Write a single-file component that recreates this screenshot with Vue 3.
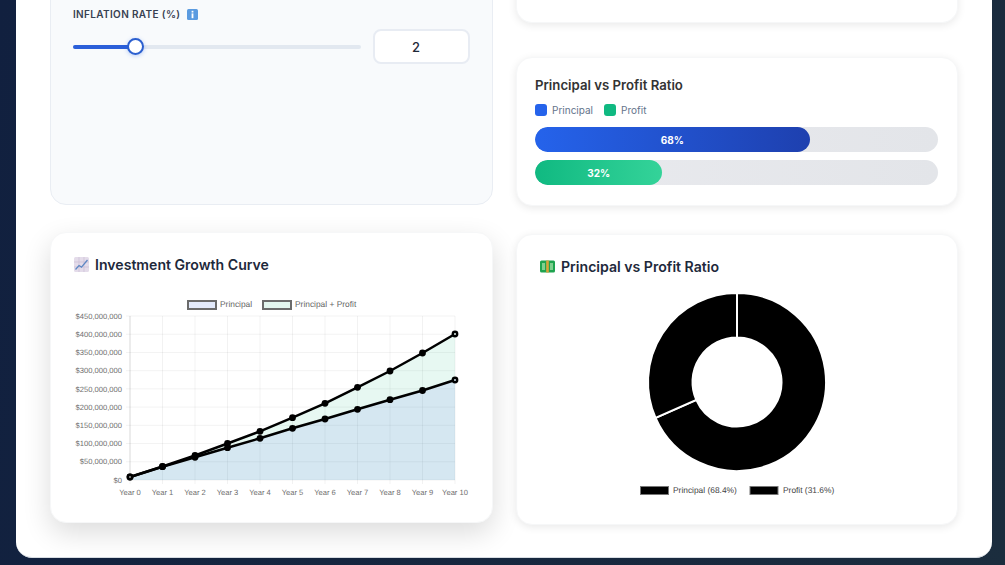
<script setup>
import { computed } from 'vue'

// y positions of the chart read off in page pixels
const plot = { left: 130, right: 455, top: 316, bottom: 480 }
const years = [0, 1, 2, 3, 4, 5, 6, 7, 8, 9, 10]
const principalY = [477, 466.7, 457.3, 447.7, 438.3, 428.3, 419, 409.3, 399.7, 390.5, 380]
const totalY = [477, 466.5, 455.5, 443.5, 431.3, 417.7, 403.3, 387.3, 371, 353, 334]
const yTicks = ['$450,000,000', '$400,000,000', '$350,000,000', '$300,000,000', '$250,000,000',
  '$200,000,000', '$150,000,000', '$100,000,000', '$50,000,000', '$0']

const stepX = (plot.right - plot.left) / 10
const stepY = (plot.bottom - plot.top) / 9

const xAt = (i) => plot.left + stepX * i
const yAt = (i) => plot.top + stepY * i

function linePoints(values) {
  return values.map((y, i) => `${xAt(i)},${y}`).join(' ')
}

const principalLine = computed(() => linePoints(principalY))
const totalLine = computed(() => linePoints(totalY))
const principalArea = computed(() => `${plot.left},${plot.bottom} ${principalLine.value} ${plot.right},${plot.bottom}`)
const totalArea = computed(() => `${totalLine.value} ${[...principalY].reverse().map((y, i) => `${xAt(10 - i)},${y}`).join(' ')}`)

// donut
const donut = { cx: 737, cy: 382, outer: 89, inner: 44.5 }

function arcPath(fromDeg, toDeg) {
  const rad = (d) => (d * Math.PI) / 180
  const pt = (r, d) => `${donut.cx + r * Math.sin(rad(d))} ${donut.cy - r * Math.cos(rad(d))}`
  const large = toDeg - fromDeg > 180 ? 1 : 0
  return `M${pt(donut.outer, fromDeg)} A${donut.outer} ${donut.outer} 0 ${large} 1 ${pt(donut.outer, toDeg)} `
    + `L${pt(donut.inner, toDeg)} A${donut.inner} ${donut.inner} 0 ${large} 0 ${pt(donut.inner, fromDeg)} Z`
}

const slices = [arcPath(0, 246.24), arcPath(246.24, 360)]
</script>

<template>
  <div class="page">
    <main class="panel">
      <section class="grid">
        <div class="card card--inputs">
          <div class="field-label">
            <span>INFLATION RATE (%)</span>
            <svg class="info-icon" width="11" height="11" viewBox="0 0 11 11">
              <rect width="11" height="11" rx="1.5" fill="#5b9be0" />
              <rect x="4.6" y="1.8" width="1.8" height="1.7" fill="#fff" />
              <rect x="4.6" y="4.4" width="1.8" height="4.8" fill="#fff" />
            </svg>
          </div>
          <div class="slider-row">
            <div class="slider">
              <div class="slider__fill"></div>
              <div class="slider__thumb"></div>
            </div>
            <input class="slider-input" type="text" value="2" readonly />
          </div>
        </div>

        <div class="side">
          <div class="card card--stub"></div>
          <div class="card card--ratio">
            <h3 class="ratio-title">Principal vs Profit Ratio</h3>
            <div class="ratio-legend">
              <span class="swatch swatch--blue"></span><span class="ratio-legend__text">Principal</span>
              <span class="swatch swatch--green"></span><span class="ratio-legend__text">Profit</span>
            </div>
            <div class="bar"><div class="bar__fill bar__fill--blue">68%</div></div>
            <div class="bar"><div class="bar__fill bar__fill--green">32%</div></div>
          </div>
        </div>

        <div class="card card--chart card--lifted">
          <h3 class="chart-title">
            <svg class="title-icon" width="15" height="15" viewBox="0 0 15 15">
              <rect width="15" height="15" rx="1.5" fill="#e4dcea" />
              <path d="M0 5h15M0 10h15M5 0v15M10 0v15" stroke="#cbbfd6" stroke-width="0.7" />
              <path d="M1.5 12.5 5 8.5l2.5 1.6L13.5 3" fill="none" stroke="#5f88c4" stroke-width="1.3" />
            </svg>
            Investment Growth Curve
          </h3>
          <svg class="chart chart--line" width="395" height="205" viewBox="74 295 395 205">
            <!-- legend -->
            <rect x="188" y="301" width="28" height="8" fill="#e3eafb" stroke="#6b6b6b" stroke-width="2" />
            <text x="220" y="307" class="legend-text">Principal</text>
            <rect x="263" y="301" width="28" height="8" fill="#e2f5ee" stroke="#6b6b6b" stroke-width="2" />
            <text x="295" y="307" class="legend-text">Principal + Profit</text>

            <!-- grid -->
            <line v-for="(tick, i) in yTicks" :key="tick" :x1="plot.left - 4" :x2="plot.right" :y1="yAt(i)" :y2="yAt(i)" class="grid-line" />
            <line v-for="i in years" :key="i" :x1="xAt(i)" :x2="xAt(i)" :y1="plot.top" :y2="plot.bottom + 4" class="grid-line" />
            <line :x1="plot.left" :x2="plot.left" :y1="plot.top" :y2="plot.bottom" class="axis-line" />

            <!-- series -->
            <polygon :points="principalArea" fill="#2b86b8" fill-opacity="0.2" />
            <polygon :points="totalArea" fill="#10b981" fill-opacity="0.1" />
            <polyline :points="principalLine" class="series-line" />
            <polyline :points="totalLine" class="series-line" />
            <circle v-for="i in years" :key="'p' + i" :cx="xAt(i)" :cy="principalY[i]" r="3.4" />
            <circle v-for="i in years" :key="'t' + i" :cx="xAt(i)" :cy="totalY[i]" r="3.4" />
            <circle :cx="xAt(0)" :cy="totalY[0]" r="1" fill="#9a9a9a" />
            <circle :cx="xAt(10)" :cy="principalY[10]" r="1" fill="#cfe0ea" />
            <circle :cx="xAt(10)" :cy="totalY[10]" r="1" fill="#e6f4ef" />

            <!-- axis labels -->
            <text v-for="(tick, i) in yTicks" :key="tick" x="122" :y="yAt(i) + 2.7" text-anchor="end" class="tick-text">{{ tick }}</text>
            <text v-for="i in years" :key="i" :x="xAt(i)" y="494.7" text-anchor="middle" class="tick-text">Year {{ i }}</text>
          </svg>
        </div>

        <div class="card card--chart">
          <h3 class="chart-title">
            <svg class="title-icon" width="15" height="13" viewBox="0 0 15 13">
              <rect y="0.5" width="15" height="12" rx="1.5" fill="#1fa34f" />
              <rect x="2" y="3" width="3" height="7" fill="#7fd08f" />
              <rect x="10" y="3" width="3" height="7" fill="#7fd08f" />
              <rect x="6.2" y="0.5" width="2.6" height="12" fill="#d8a23a" />
            </svg>
            Principal vs Profit Ratio
          </h3>
          <svg class="chart chart--donut" width="395" height="210" viewBox="540 290 395 210">
            <path v-for="d in slices" :key="d" :d="d" fill="#000" stroke="#fff" stroke-width="2" />
            <rect x="640.5" y="486.5" width="28" height="8" fill="#000" stroke="#777" />
            <text x="673" y="492.5" class="legend-text legend-text--dark">Principal (68.4%)</text>
            <rect x="750" y="486.5" width="28" height="8" fill="#000" stroke="#777" />
            <text x="783" y="492.5" class="legend-text legend-text--dark">Profit (31.6%)</text>
          </svg>
        </div>
      </section>
    </main>
  </div>
</template>

<style>
html,
body {
  margin: 0;
  overflow: hidden;
}
</style>

<style scoped>
.page {
  height: 565px;
  overflow: hidden;
  background: linear-gradient(100deg, #11203f 0%, #1b2d3e 100%);
  font-family: Inter, 'Liberation Sans', sans-serif;
}

.panel {
  width: 976px;
  height: 575px;
  margin: -17px 0 0 16px;
  box-sizing: border-box;
  background: #fff;
  border-bottom: 1px solid #d8dde3;
  border-radius: 0 0 16px 16px;
  padding: 0 34px;
}

.grid {
  display: grid;
  grid-template-columns: 443px 442px;
  grid-template-rows: 223px 291px;
  column-gap: 23px;
  row-gap: 28px;
}

.card {
  box-sizing: border-box;
  background: #fff;
  border: 1px solid #f6f7f8;
  border-radius: 16px;
  box-shadow: 0 2px 8px rgba(0, 0, 0, 0.09);
}

.card--inputs {
  background: #f8fafc;
  border-color: #e9edf3;
  box-shadow: none;
  margin-bottom: 1px;
  padding: 23px 22px 0;
}

.field-label {
  display: flex;
  align-items: center;
  gap: 7px;
  height: 14px;
  font-size: 10px;
  font-weight: 600;
  letter-spacing: 0.35px;
  color: #374151;
}

.slider-row {
  display: flex;
  align-items: center;
  gap: 12px;
  margin-top: 8px;
}

.slider {
  position: relative;
  flex: 1;
  height: 4px;
  border-radius: 2px;
  background: #e2e8f0;
}

.slider__fill {
  width: 63px;
  height: 100%;
  border-radius: 2px;
  background: #2b5fd9;
}

.slider__thumb {
  position: absolute;
  left: 54px;
  top: -6.5px;
  box-sizing: border-box;
  width: 17px;
  height: 17px;
  border: 2.5px solid #2b5fcf;
  border-radius: 50%;
  background: #fff;
  box-shadow: 0 1px 4px rgba(37, 99, 235, 0.3);
}

.slider-input {
  box-sizing: border-box;
  width: 97px;
  height: 35px;
  padding: 0 11px 0 0;
  border: 2px solid #e8ecf3;
  border-radius: 8px;
  background: #fff;
  font-family: inherit;
  font-size: 13px;
  font-weight: 500;
  color: #1f2937;
  text-align: center;
  outline: none;
}

.side {
  display: flex;
  flex-direction: column;
  gap: 34px;
}

.card--stub {
  height: 40px;
  border-top: none;
  border-radius: 0 0 16px 16px;
}

.card--ratio {
  height: 149px;
  padding: 18px 19px 0 18px;
}

.ratio-title {
  margin: 0;
  font-size: 13.2px;
  line-height: 18px;
  font-weight: 600;
  color: #333;
}

.ratio-legend {
  display: flex;
  align-items: center;
  height: 12px;
  margin: 10px 0 11px;
  font-size: 10px;
  color: #64748b;
}

.ratio-legend__text {
  margin: 0 11px 0 5.5px;
}

.swatch {
  width: 11.5px;
  height: 11.5px;
  border-radius: 3px;
}

.swatch--blue {
  background: #2563eb;
}

.swatch--green {
  background: #10b981;
}

.bar {
  height: 25px;
  margin-bottom: 8px;
  border-radius: 13px;
  background: linear-gradient(90deg, #e9eaee, #e3e5e9);
  overflow: hidden;
}

.bar__fill {
  height: 100%;
  border-radius: 13px;
  font-size: 10px;
  line-height: 26px;
  font-weight: 700;
  color: #fff;
  text-align: center;
}

.bar__fill--blue {
  width: 68.2%;
  background: linear-gradient(90deg, #2563eb, #1e40af);
}

.bar__fill--green {
  width: 31.6%;
  background: linear-gradient(90deg, #10b981, #34d399);
}

.card--chart {
  padding: 22px 23px 0;
}

.card--lifted {
  transform: translateY(-2px);
  box-shadow: 0 10px 28px rgba(0, 0, 0, 0.14);
}

.chart-title {
  display: flex;
  align-items: center;
  gap: 6px;
  height: 18px;
  margin: 0;
  font-size: 14.1px;
  font-weight: 600;
  color: #1e293b;
}

.title-icon {
  flex: none;
}

.chart {
  display: block;
  text-rendering: geometricPrecision;
}

.chart--line {
  margin-top: 22px;
}

.chart--donut {
  margin-top: 15px;
}

.grid-line {
  stroke: rgba(0, 0, 0, 0.05);
  stroke-width: 1;
}

.axis-line {
  stroke: rgba(0, 0, 0, 0.1);
  stroke-width: 1;
}

.series-line {
  fill: none;
  stroke: #000;
  stroke-width: 2.5;
}

.legend-text {
  font-family: 'Liberation Sans', sans-serif;
  font-size: 8.4px;
  fill: #666;
}

.legend-text--dark {
  fill: #444;
}

.tick-text {
  font-family: 'Liberation Sans', sans-serif;
  font-size: 7.6px;
  fill: #6f6f6f;
}
</style>
